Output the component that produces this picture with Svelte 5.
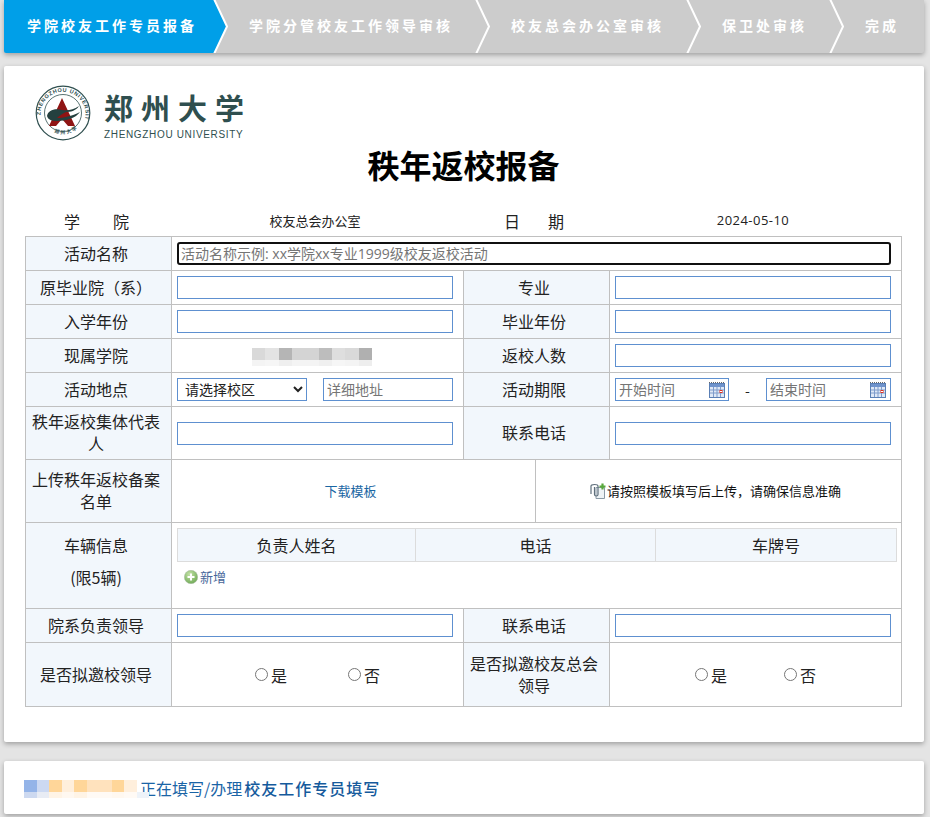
<script>
	const steps = [
		{ name: '学院校友工作专员报备', active: true },
		{ name: '学院分管校友工作领导审核' },
		{ name: '校友总会办公室审核' },
		{ name: '保卫处审核' },
		{ name: '完成' }
	];

	// blurred-out names, one list per mosaic row
	const grayTop = ['#d9d9d9', '#e3e3e3', '#b5b5b5', '#d4d4d4', '#d4d4d4', '#bdbdbd', '#dedede', '#d9d9d9', '#b0b0b0'];
	const grayBottom = ['#f4f4f4', '#f6f6f6', '#efefef', '#f4f4f4', '#f4f4f4', '#f0f0f0', '#f6f6f6', '#f4f4f4', '#eeeeee'];
	const nameTop = ['#94b4e8', '#ccd9f2', '#ffd699', '#ffefdc', '#ffd699', '#ffe2bd', '#ffe2bd', '#ffd699', '#ffefdc', 'transparent'];
	const nameBottom = ['#cdd9f0', '#e8ecf4', '#fff4e6', '#fff8f0', '#fff4e6', '#fffaf5', '#fffaf5', '#fff8f0', '#fffaf5', '#eef3f9'];
</script>

{#snippet calendar()}
	<svg class="cal" viewBox="0 0 16 16" width="16" height="16" aria-hidden="true">
		<rect x="0.5" y="1.5" width="15" height="14" fill="#dfe8f6" stroke="#5a7fb5" />
		<rect x="1" y="2" width="14" height="3" fill="#6f93cc" />
		<path d="M0 0.5h16" stroke="#666" stroke-dasharray="1 1" />
		<path d="M1 8h14M1 11h14M4.5 5v10M8 5v10M11.5 5v10" stroke="#7f9ccb" stroke-width="1" />
		<rect x="11" y="8.5" width="2" height="2" fill="#fff" stroke="#e03020" />
	</svg>
{/snippet}

{#snippet mosaic(top, bottom, cls)}
	<div class="mosaic {cls}">
		{#each top as color}<i style:background={color}></i>{/each}
		{#each bottom as color}<i class="low" style:background={color}></i>{/each}
	</div>
{/snippet}

<div class="page">
	<nav class="steps">
		{#each steps as step, i}
			<div class="step" class:active={step.active}>{step.name}</div>
			{#if i < steps.length - 1}
				<svg class="sep" viewBox="0 0 15 53" width="15" height="53" aria-hidden="true">
					<path d="M0 0H1L14 26.5 1 53H0Z" fill={step.active ? '#009fe8' : '#cccccc'} />
					<path d="M1 -1L14 26.5 1 54" fill="none" stroke="#fff" stroke-width="2" />
				</svg>
			{/if}
		{/each}
	</nav>

	<section class="card">
		<div class="logo">
			<svg class="seal" viewBox="0 0 56 56" width="56" height="56" aria-hidden="true">
				<defs>
					<path id="ring" d="M6 34A22.5 22.5 0 1 1 50 34" />
					<path id="ringlow" d="M14 44A21.5 21.5 0 0 0 42 44" />
				</defs>
				<circle cx="28" cy="28" r="26.8" fill="#fff" stroke="#2f4f4f" stroke-width="1.2" />
				<circle cx="28" cy="28" r="18.5" fill="none" stroke="#2f4f4f" stroke-width="0.8" />
				<text class="ring-text"><textPath href="#ring" startOffset="4">ZHENGZHOU UNIVERSITY</textPath></text>
				<text class="ring-low"><textPath href="#ringlow" startOffset="6">郑州大学</textPath></text>
				<path d="M27 13L40 41H33L27 34 21 41H14Z" fill="#8f1414" />
				<path d="M12 31C13 25 20 23 27 25 33 26 38 25 44 21 41 26 35 27 31 27 27 29 24 31 22 33 28 33 37 31 45 27 41 33 31 36 22 36 17 36 13 35 12 31Z" fill="#24403f" />
			</svg>
			<div class="wordmark">
				<div class="zh">郑州大学</div>
				<div class="en">ZHENGZHOU UNIVERSITY</div>
			</div>
		</div>

		<h1>秩年返校报备</h1>

		<div class="meta">
			<div class="spread first"><span>学</span><span>院</span></div>
			<div class="small">校友总会办公室</div>
			<div class="spread second"><span>日</span><span>期</span></div>
			<div class="small day">2024-05-10</div>
		</div>

		<table class="form">
			<colgroup>
				<col style="width:146px" />
				<col style="width:292px" />
				<col style="width:72px" />
				<col style="width:74px" />
				<col style="width:292px" />
			</colgroup>
			<tbody>
				<tr class="h34">
					<th>活动名称</th>
					<td colspan="4" class="cell">
						<input class="focused" type="text" placeholder="活动名称示例: xx学院xx专业1999级校友返校活动" />
					</td>
				</tr>
				<tr class="h34">
					<th>原毕业院（系）</th>
					<td class="cell"><input type="text" /></td>
					<th colspan="2">专业</th>
					<td class="cell"><input type="text" /></td>
				</tr>
				<tr class="h34">
					<th>入学年份</th>
					<td class="cell"><input type="text" /></td>
					<th colspan="2">毕业年份</th>
					<td class="cell"><input type="text" /></td>
				</tr>
				<tr class="h34">
					<th>现属学院</th>
					<td class="cell">{@render mosaic(grayTop, grayBottom, 'gray')}</td>
					<th colspan="2">返校人数</th>
					<td class="cell"><input type="text" /></td>
				</tr>
				<tr class="h34">
					<th>活动地点</th>
					<td class="cell">
						<div class="pair">
							<select>
								<option>请选择校区</option>
							</select>
							<input type="text" placeholder="详细地址" />
						</div>
					</td>
					<th colspan="2">活动期限</th>
					<td class="cell">
						<div class="dates">
							<div class="date start">
								<input type="text" placeholder="开始时间" />
								{@render calendar()}
							</div>
							<span class="dash">-</span>
							<div class="date end">
								<input type="text" placeholder="结束时间" />
								{@render calendar()}
							</div>
						</div>
					</td>
				</tr>
				<tr class="h53">
					<th>秩年返校集体代表人</th>
					<td class="cell"><input type="text" /></td>
					<th colspan="2">联系电话</th>
					<td class="cell"><input type="text" /></td>
				</tr>
				<tr class="h63">
					<th>上传秩年返校备案名单</th>
					<td colspan="2" class="center"><a href="#template">下载模板</a></td>
					<td colspan="2" class="center">
						<div class="upload">
							<svg viewBox="0 0 17 17" width="17" height="17" aria-hidden="true">
								<path d="M6 4.5H14.5V15.5H6Z" fill="#eef3f6" stroke="#8b9aa6" />
								<path d="M4.5 4V11.5C4.5 13.5 8 13.5 8 11.5V3C8 1 1 1 1 3V11" fill="none" stroke="#5f6f7c" stroke-width="1.2" />
								<path d="M12.5 0.5V6.5M9.5 3.5H15.5" stroke="#58a83c" stroke-width="2.2" />
							</svg>
							<span>请按照模板填写后上传，请确保信息准确</span>
						</div>
					</td>
				</tr>
				<tr class="h86">
					<th class="vehicle"><div>车辆信息</div><div>(限5辆)</div></th>
					<td colspan="4" class="vehicle-cell">
						<table class="cars">
							<colgroup>
								<col style="width:238px" />
								<col style="width:240px" />
								<col style="width:241px" />
							</colgroup>
							<thead>
								<tr>
									<th>负责人姓名</th>
									<th>电话</th>
									<th>车牌号</th>
								</tr>
							</thead>
						</table>
						<button type="button" class="add">
							<svg viewBox="0 0 14 14" width="14" height="14" aria-hidden="true">
								<defs>
									<radialGradient id="green" cx="0.4" cy="0.3" r="0.8">
										<stop offset="0" stop-color="#c4e2a8" />
										<stop offset="1" stop-color="#68a64f" />
									</radialGradient>
								</defs>
								<circle cx="7" cy="7" r="6.7" fill="url(#green)" stroke="#a9b9a5" stroke-width="0.5" />
								<path d="M7 3.5V10.5M3.5 7H10.5" stroke="#fff" stroke-width="2" />
							</svg>
							新增
						</button>
					</td>
				</tr>
				<tr class="h34">
					<th>院系负责领导</th>
					<td class="cell"><input type="text" /></td>
					<th colspan="2">联系电话</th>
					<td class="cell"><input type="text" /></td>
				</tr>
				<tr class="h64">
					<th>是否拟邀校领导</th>
					<td class="center">
						<div class="radios wide">
							<label><input type="radio" name="leader" />是</label>
							<label><input type="radio" name="leader" />否</label>
						</div>
					</td>
					<th colspan="2">是否拟邀校友总会领导</th>
					<td class="center">
						<div class="radios">
							<label><input type="radio" name="alumni" />是</label>
							<label><input type="radio" name="alumni" />否</label>
						</div>
					</td>
				</tr>
			</tbody>
		</table>
	</section>

	<footer class="card status">
		{@render mosaic(nameTop, nameBottom, 'name')}
		<span>正在填写/办理</span><strong>校友工作专员填写</strong>
	</footer>
</div>

<style>
	:global(body) {
		background: #e4e4e4;
		font-family: "Noto Sans CJK SC", "Noto Sans", sans-serif;
		color: #222;
	}

	.page {
		padding: 0 6px 3px 4px;
		height: 814px;
		overflow: hidden;
		display: flex;
		flex-direction: column;
	}

	.steps {
		display: flex;
		height: 53px;
		flex: none;
		background: #ccc;
		box-shadow: 0 2px 5px rgba(0, 0, 0, 0.3);
		border-radius: 0 0 2px 2px;
	}

	.step {
		padding: 0 22px 0 21px;
		line-height: 50px;
		font-size: 14px;
		font-weight: 700;
		letter-spacing: 3px;
		color: #fff;
		white-space: nowrap;
	}

	.step.active {
		background: #009fe8;
		padding: 0 16px 0 23px;
		border-radius: 0 0 0 2px;
	}

	.sep {
		flex: none;
		display: block;
		overflow: hidden;
	}

	.card {
		background: #fff;
		border-radius: 2px;
		box-shadow: 0 2px 5px rgba(0, 0, 0, 0.3);
	}

	section.card {
		margin-top: 13px;
		height: 676px;
		flex: none;
		padding: 0 22px 0 21px;
		box-sizing: border-box;
	}

	.logo {
		display: flex;
		align-items: flex-start;
		gap: 13px;
		padding: 19px 0 0 10px;
		height: 55px;
	}

	.seal {
		flex: none;
		overflow: visible;
	}

	.ring-text {
		font: 700 5.4px "Liberation Sans", sans-serif;
		letter-spacing: 0.65px;
		fill: #2f4f4f;
	}

	.ring-low {
		font: 700 5px "Noto Sans CJK SC", sans-serif;
		letter-spacing: 1.5px;
		fill: #2f4f4f;
	}

	.wordmark {
		color: #2f4f4f;
		width: 142px;
	}

	.zh {
		font-size: 29px;
		font-weight: 700;
		line-height: 44px;
		letter-spacing: 8px;
		white-space: nowrap;
	}

	.en {
		font: 10px/12px "Liberation Sans", sans-serif;
		letter-spacing: 0.66px;
		white-space: nowrap;
	}

	h1 {
		margin: 0;
		padding-top: 1px;
		height: 50px;
		font-size: 32px;
		line-height: 46px;
		font-weight: 700;
		color: #000;
		text-align: center;
	}

	.meta {
		display: grid;
		grid-template-columns: 146px 292px 146px 292px;
		height: 45px;
		align-items: end;
		line-height: 30px;
		font-size: 16px;
		box-sizing: border-box;
		text-align: center;
	}

	.small {
		font-size: 13px;
		padding-right: 4px;
	}

	.day {
		font-family: "Open Sans", "Noto Sans CJK SC", sans-serif;
		letter-spacing: 0.45px;
		margin-bottom: 1px;
	}

	.spread {
		display: flex;
		justify-content: center;
	}

	.first {
		gap: 33px;
		padding-right: 3px;
	}

	.second {
		gap: 28px;
		padding-right: 4px;
	}

	.form {
		width: 876px;
		table-layout: fixed;
		border-collapse: collapse;
		font-size: 16px;
		line-height: 22px;
	}

	.form > tbody > tr > th,
	.form > tbody > tr > td {
		border: 1px solid #c0c0c0;
		padding: 0;
	}

	.form > tbody > tr > th {
		background: #f2f7fc;
		font-weight: 400;
		padding: 0 8px 2px 3px;
		text-align: center;
	}

	.h34 { height: 34px; }
	.h53 { height: 53px; }
	.h63 { height: 63px; }
	.h86 { height: 86px; }
	.h64 { height: 64px; }

	.cell {
		padding: 0 10px 0 5px !important;
	}

	input[type="text"],
	select {
		display: block;
		width: 100%;
		height: 23px;
		box-sizing: border-box;
		border: 1px solid #5e90d0;
		border-radius: 0;
		background: #fff;
		font: 14px "Open Sans", "Noto Sans CJK SC", sans-serif;
		padding: 0 3px;
		margin: 0;
		color: #222;
		outline: none;
	}

	input::placeholder {
		color: #757575;
		opacity: 1;
	}

	input.focused {
		border: 2px solid #101010;
		border-radius: 3px;
		padding: 0 2px;
		height: 23px;
	}

	.pair {
		display: flex;
		gap: 16px;
	}

	.pair select {
		width: 130px;
		flex: none;
		padding-left: 3px;
	}

	.dates {
		display: flex;
		align-items: center;
	}

	.date {
		display: flex;
		align-items: center;
		height: 23px;
		box-sizing: border-box;
		border: 1px solid #5e90d0;
		padding-right: 4px;
	}

	.date.start { width: 114px; padding-right: 3px; }
	.date.end { width: 125px; }

	.date input[type="text"] {
		border: 0;
		height: 21px;
		min-width: 0;
		flex: 1;
	}

	.cal {
		flex: none;
		display: block;
	}

	.dash {
		width: 37px;
		text-align: center;
		font-size: 14px;
	}

	.center {
		text-align: center;
	}

	.center a {
		display: block;
		padding-right: 6px;
		font-size: 13px;
		color: #1a66a3;
		text-decoration: none;
	}

	.upload {
		display: flex;
		justify-content: center;
		align-items: center;
		padding-right: 6px;
		font-size: 13px;
		color: #111;
		white-space: nowrap;
	}

	.vehicle div {
		line-height: 32px;
	}

	.form > tbody > tr > th.vehicle {
		padding-bottom: 10px;
	}

	.vehicle-cell {
		padding: 5px 5px 0 5px !important;
		vertical-align: top;
	}

	.cars {
		width: 719px;
		table-layout: fixed;
		border-collapse: collapse;
	}

	.cars th {
		height: 32px;
		padding: 0;
		background: #f2f7fc;
		border: 1px solid #dcdcdc;
		font-weight: 400;
		font-size: 16px;
	}

	.add {
		display: flex;
		align-items: center;
		gap: 2px;
		margin: 5px 0 0 7px;
		padding: 0;
		border: 0;
		background: none;
		font: 13px "Noto Sans CJK SC", sans-serif;
		color: #47679a;
	}

	.radios {
		display: flex;
		justify-content: center;
		gap: 57px;
	}

	.radios.wide {
		gap: 61px;
	}

	.radios label {
		display: flex;
		align-items: center;
		gap: 3px;
	}

	.radios input {
		width: 13px;
		height: 13px;
		margin: 0;
	}

	.mosaic {
		display: grid;
		grid-template-columns: repeat(9, 13.33px);
		grid-template-rows: 12px 6px;
		width: max-content;
	}

	.mosaic i {
		display: block;
	}

	.mosaic.gray {
		margin: 3px 0 0 75px;
	}

	.mosaic.name {
		grid-template-columns: repeat(10, 12.5px);
		margin: 3px -9px 0 0;
		position: relative;
		z-index: 1;
	}

	.status {
		margin-top: 19px;
		height: 53px;
		flex: none;
		display: flex;
		align-items: center;
		padding-left: 20px;
		font-size: 16px;
		color: #1a64a6;
		white-space: nowrap;
	}

	.status span {
		padding-right: 2px;
	}

	.status strong {
		font-weight: 500;
		letter-spacing: 1px;
		color: #155a9c;
	}
</style>
